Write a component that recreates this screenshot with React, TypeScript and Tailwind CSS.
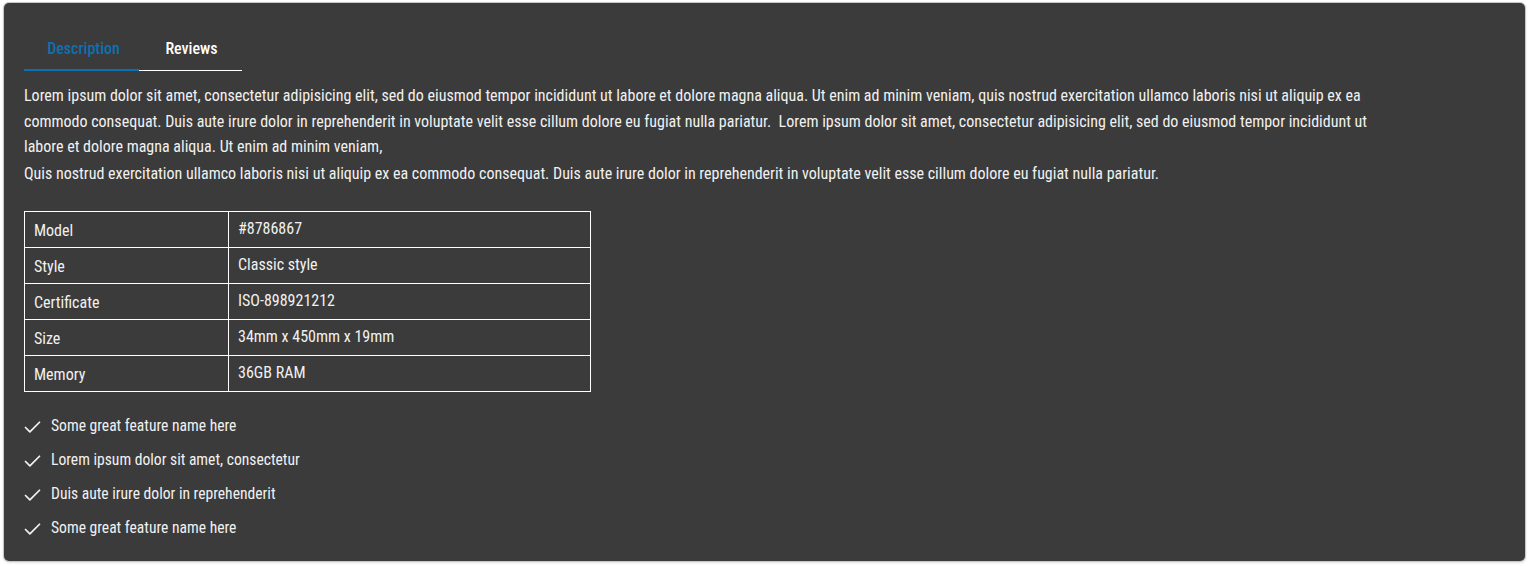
import { Check } from "lucide-react";

const specs = [
  ["Model", "#8786867"],
  ["Style", "Classic style"],
  ["Certificate", "ISO-898921212"],
  ["Size", "34mm x 450mm x 19mm"],
  ["Memory", "36GB RAM"],
];

const features = [
  "Some great feature name here",
  "Lorem ipsum dolor sit amet, consectetur",
  "Duis aute irure dolor in reprehenderit",
  "Some great feature name here",
];

export default function App() {
  return (
    <div className="min-h-screen bg-white pt-[3px] pl-[4px] pr-[5px] font-['Roboto',sans-serif] [font-stretch:condensed] text-[#f1f1f1]">
      <div className="h-[558px] rounded-[5px] bg-[#3b3b3b] px-5 pt-[24px] shadow-[0_0_0_1px_#c8c8c8,0_1px_3px_rgba(0,0,0,0.25)]">
        {/* Tabs */}
        <div className="flex items-end">
          <button className="flex h-[44px] w-[115px] items-center justify-center border-b-2 border-[#0d70b4] pl-[4px] pt-[2px] text-[16px] font-medium text-[#0d70b4]">
            Description
          </button>
          <button className="flex h-[44px] w-[103px] items-center justify-center border-b border-white pl-[2px] pt-[1px] text-[16px] font-medium text-white">
            Reviews
          </button>
        </div>

        {/* Description text */}
        <div className="mt-[12px] max-w-[1375px] text-[16px] leading-[25.5px]">
          <p>
            Lorem ipsum dolor sit amet, consectetur adipisicing elit, sed do eiusmod tempor incididunt ut labore et
            dolore magna aliqua. Ut enim ad minim veniam, quis nostrud exercitation ullamco laboris nisi ut aliquip ex
            ea commodo consequat. Duis aute irure dolor in reprehenderit in voluptate velit esse cillum dolore eu fugiat
            nulla pariatur.&nbsp; Lorem ipsum dolor sit amet, consectetur adipisicing elit, sed do eiusmod tempor
            incididunt ut labore et dolore magna aliqua. Ut enim ad minim veniam,
          </p>
          <p className="mt-[1px]">
            Quis nostrud exercitation ullamco laboris nisi ut aliquip ex ea commodo consequat. Duis aute irure dolor in
            reprehenderit in voluptate velit esse cillum dolore eu fugiat nulla pariatur.
          </p>
        </div>

        {/* Specs table */}
        <table className="mt-[25px] w-[567px] border-collapse text-[16px]">
          <tbody>
            {specs.map(([k, v]) => (
              <tr key={k} className="h-[36px]">
                <td className="w-[204px] border border-white px-[9px] pt-[2px] align-middle">{k}</td>
                <td className="border border-white px-[9px] pb-[2px] align-middle">{v}</td>
              </tr>
            ))}
          </tbody>
        </table>

        {/* Features */}
        <ul className="mt-[25px] flex flex-col gap-[14px] text-[15.6px]">
          {features.map((f, i) => (
            <li key={i} className="flex h-[20px] items-center gap-[8px]">
              <Check size={21} strokeWidth={2} className="ml-[-2px]" />
              <span>{f}</span>
            </li>
          ))}
        </ul>
      </div>
    </div>
  );
}
